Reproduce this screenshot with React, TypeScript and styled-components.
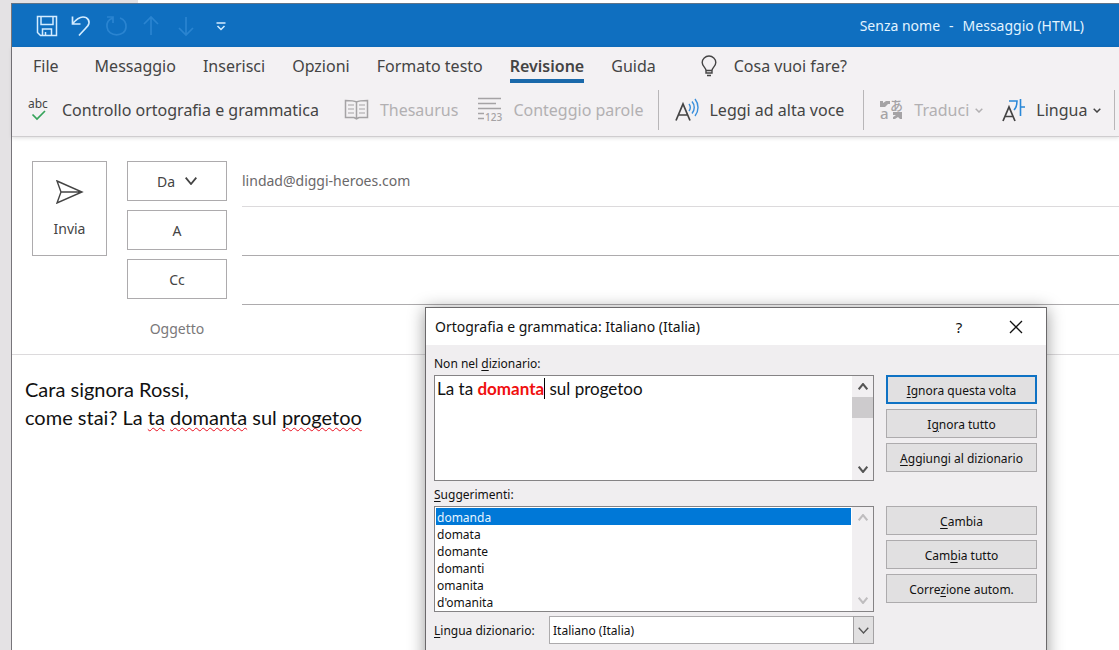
import React from "react";
import styled, { createGlobalStyle, css } from "styled-components";

const ui = `"Noto Sans", "Open Sans", sans-serif`;
const doc = `Lato, "Open Sans", sans-serif`;

const Global = createGlobalStyle`
  *, *::before, *::after { box-sizing: border-box; }
  body { margin: 0; background: #fff; font-family: ${ui}; color: #444; }
  button, input, select { font: inherit; color: inherit; border-radius: 0; margin: 0; }
`;

const Desktop = styled.div`
  position: relative;
  display: flex;
  flex-direction: column;
  min-height: 100vh;
  padding-left: 11px;
  overflow: hidden;
  background: linear-gradient(90deg, #e4e2e4 138px, #fff 138px);
`;
const TopGap = styled.div`
  height: 3px;
`;
const Window = styled.main`
  flex: 1;
  display: flex;
  flex-direction: column;
  background: #fff;
  border-left: 1px solid #77757a;
  border-top: 1px solid #5f7388;
`;

const TitleBar = styled.header`
  display: flex;
  align-items: center;
  justify-content: space-between;
  height: 43px;
  padding: 0 35px 0 24px;
  background: #0f6fc0;
  color: #e2f4ff;
`;
const QuickAccess = styled.div`
  display: flex;
  align-items: center;
  gap: 11px;
`;
const IconButton = styled.button<{ $faded?: boolean }>`
  display: flex;
  padding: 0;
  border: 0;
  background: none;
  color: ${(p) => (p.$faded ? "#2a84d0" : "#d3ecff")};
`;
const Title = styled.h1`
  display: flex;
  gap: 9px;
  margin: 0;
  font-size: 14px;
  font-weight: 400;
  line-height: 20px;
`;

const Ribbon = styled.div`
  background: #f3f1f3;
  border-bottom: 1px solid #cfcdcf;
  box-shadow: 0 1px 4px rgba(0, 0, 0, 0.14);
`;
const Tabs = styled.nav`
  display: flex;
  align-items: flex-start;
  gap: 27px;
  height: 40px;
  padding: 8px 0 0 21px;
`;
const Tab = styled.button<{ $active?: boolean; $first?: boolean }>`
  padding: 0 0 2px;
  border: 0;
  border-bottom: 4px solid ${(p) => (p.$active ? "#1a69aa" : "transparent")};
  background: none;
  font-size: 16px;
  line-height: 22px;
  font-weight: ${(p) => (p.$active ? 600 : 400)};
  white-space: nowrap;
  ${(p) => p.$first && css`margin-right: 9px;`}
`;
const TellMe = styled.button`
  display: flex;
  gap: 17px;
  margin-left: 18px;
  padding: 0;
  border: 0;
  background: none;
  font-size: 16px;
  line-height: 22px;
`;
const Commands = styled.div`
  display: flex;
  align-items: center;
  height: 49px;
  padding: 0 0 3px 16px;
`;
const Command = styled.button<{ $disabled?: boolean; $gap: number }>`
  flex: none;
  display: flex;
  align-items: center;
  gap: 10px;
  padding: 0;
  margin-right: ${(p) => p.$gap}px;
  border: 0;
  background: none;
  font-size: 16px;
  line-height: 22px;
  white-space: nowrap;
  color: ${(p) => (p.$disabled ? "#b2b0b2" : "#444")};
`;
const Caret = styled.span`
  display: flex;
  margin-left: -4px;
`;
const Separator = styled.span`
  flex: none;
  width: 1px;
  height: 40px;
  margin-right: 16px;
  background: #b8b6b8;
`;

const Envelope = styled.section`
  display: flex;
  align-items: flex-start;
  gap: 20px;
  padding: 24px 0 0 20px;
  border-bottom: 1px solid #dcdadc;
`;
const SendButton = styled.button`
  display: flex;
  flex-direction: column;
  align-items: center;
  gap: 15px;
  width: 75px;
  height: 95px;
  padding: 18px 0 0;
  border: 1px solid #adabad;
  background: #fff;
  font-size: 14px;
  line-height: 20px;
`;
const Fields = styled.div`
  flex: 1;
  display: flex;
  flex-direction: column;
  gap: 3px;
`;
const FieldRow = styled.div`
  display: flex;
  align-items: flex-start;
  gap: 15px;
  height: 46px;
`;
const fieldLabel = css`
  display: flex;
  align-items: center;
  justify-content: center;
  gap: 10px;
  width: 100px;
  height: 40px;
  font-size: 14px;
`;
const FieldButton = styled.button`
  ${fieldLabel}
  padding: 0;
  border: 1px solid #adabad;
  background: #fff;
`;
const FieldLabel = styled.label`
  ${fieldLabel}
  color: #7a787a;
`;
const FieldInput = styled.input<{ $line?: string }>`
  flex: 1;
  height: 46px;
  padding: 0 0 6px;
  border: 0;
  border-bottom: 1px solid ${(p) => p.$line ?? "transparent"};
  outline: 0;
  background: none;
  font-size: 14px;
  color: #6a686a;
`;

const MessageBody = styled.div`
  flex: 1;
  padding: 20px 13px;
  font-family: ${doc};
  font-size: 20px;
  line-height: 28px;
  color: #111;
  outline: 0;
  p { margin: 0; }
`;
const Misspelled = styled.span`
  text-decoration: underline wavy #e81020 1px;
  text-underline-offset: 2px;
  text-decoration-skip-ink: none;
`;

const Dialog = styled.section`
  position: absolute;
  left: 425px;
  top: 307px;
  width: 622px;
  background: #f0eef0;
  border: 1px solid #6b696b;
  box-shadow: 0 2px 16px rgba(0, 0, 0, 0.4);
  font-size: 12px;
  color: #111;
`;
const DialogBar = styled.header`
  display: flex;
  align-items: center;
  height: 37px;
  padding: 0 22px 0 9px;
  background: #fff;
`;
const DialogTitle = styled.h2`
  flex: 1;
  margin: 0;
  font-size: 14px;
  font-weight: 400;
`;
const BarButton = styled.button`
  display: flex;
  align-items: center;
  justify-content: center;
  width: 16px;
  height: 24px;
  margin-left: 41px;
  padding: 0;
  border: 0;
  background: none;
  font-size: 15px;
  line-height: 20px;
`;
const DialogContent = styled.div`
  display: grid;
  grid-template-columns: 440px 1fr;
  column-gap: 12px;
  padding: 9px 9px 24px 8px;
`;
const Caption = styled.div`
  grid-column: 1 / -1;
  height: 21px;
  line-height: 20px;
`;
const Panel = styled.div`
  display: flex;
  height: 106px;
  border: 1px solid #858385;
  background: #fff;
`;
const Sentence = styled.div`
  flex: 1;
  padding: 2px;
  font-family: ${doc};
  font-size: 17px;
  line-height: 22px;
  outline: 0;
  strong { color: #f01010; border-right: 1px solid #000; }
`;
const Suggestions = styled.select`
  flex: 1;
  height: 104px;
  padding: 1px;
  border: 0;
  outline: 0;
  background: #fff;
  appearance: none;
  overflow: hidden;
  scrollbar-width: none;
  option {
    height: 17px;
    min-height: 17px;
    padding: 1px 1px 0;
    line-height: 17px;
  }
  option:checked {
    background: linear-gradient(#0078d7, #0078d7);
    color: #e6f5ff;
  }
`;
const Scrollbar = styled.div<{ $off?: boolean }>`
  display: flex;
  flex-direction: column;
  width: 21px;
  background: #f1eff1;
  color: ${(p) => (p.$off ? "#bfbdbf" : "#555")};
`;
const ScrollButton = styled.button`
  display: flex;
  align-items: center;
  justify-content: center;
  height: 21px;
  padding: 0;
  border: 0;
  background: none;
`;
const Track = styled.div`
  flex: 1;
`;
const Thumb = styled.div`
  height: 21px;
  background: #cdcbcd;
`;
const Actions = styled.div`
  display: flex;
  flex-direction: column;
  gap: 5px;
`;
const Action = styled.button<{ $primary?: boolean }>`
  height: 29px;
  padding: 1px 0 0;
  border: ${(p) => (p.$primary ? "2px solid #0f72c4" : "1px solid #adabad")};
  background: #e1e0e1;
`;
const Key = styled.span`
  text-decoration: underline;
  text-underline-offset: 2px;
`;
const Gap = styled.div`
  grid-column: 1 / -1;
  height: 4px;
`;
const LanguageRow = styled.div`
  display: flex;
  align-items: center;
  justify-content: space-between;
  height: 28px;
`;
const SelectBox = styled.div`
  display: grid;
  grid-template-columns: 1fr 21px;
  width: 325px;
  height: 28px;
  select {
    grid-area: 1 / 1 / 2 / 3;
    padding: 0 3px;
    border: 1px solid #adabad;
    background: #fff;
    appearance: none;
    outline: 0;
  }
  span {
    grid-area: 1 / 2;
    z-index: 1;
    display: flex;
    align-items: center;
    justify-content: center;
    border: 1px solid #a3a1a3;
    background: #e1e0e1;
    color: #555;
    pointer-events: none;
  }
`;

const Icon = ({ w, h, sw = 1.5, children }: { w: number; h: number; sw?: number; children: React.ReactNode }) => (
  <svg width={w} height={h} viewBox={`0 0 ${w} ${h}`} fill="none" stroke="currentColor" strokeWidth={sw} aria-hidden="true">
    {children}
  </svg>
);
const Chevron = ({ w = 8, h = 5, sw = 1.5, up }: { w?: number; h?: number; sw?: number; up?: boolean }) => (
  <Icon w={w} h={h} sw={sw}>
    <path d={up ? `M.7 ${h - 0.7} ${w / 2} 1l${w / 2 - 0.7} ${h - 1.7}` : `M.7 .7 ${w / 2} ${h - 1}l${w / 2 - 0.7} ${1.7 - h}`} />
  </Icon>
);

const Scroll = ({ off }: { off?: boolean }) => (
  <Scrollbar $off={off}>
    <ScrollButton aria-label="Scorri su"><Chevron w={10} h={7} sw={2} up /></ScrollButton>
    {!off && <Thumb />}
    <Track />
    <ScrollButton aria-label="Scorri giù"><Chevron w={10} h={7} sw={2} /></ScrollButton>
  </Scrollbar>
);

const words = ["domanda", "domata", "domante", "domanti", "omanita", "d'omanita"];

export default function App() {
  return (
    <Desktop>
      <Global />
      <TopGap />
      <Window>
        <TitleBar>
          <QuickAccess>
            <IconButton aria-label="Salva">
              <Icon w={22} h={22}>
                <path d="M1.500 1.500h19v19H4.500l-3-3zM5 2v7.500h12V2M6.500 20v-6h9v6M9.500 20v-3" />
              </Icon>
            </IconButton>
            <IconButton aria-label="Annulla">
              <Icon w={24} h={22} sw={1.7}>
                <path d="M3.500 1.500v7.500h8M3.500 9c3.500-4.500 7-7 10.500-7 5 0 7.500 4.500 5 8.500-1.200 1.800-4.500 5-9 10" />
              </Icon>
            </IconButton>
            <IconButton aria-label="Ripeti" $faded>
              <Icon w={24} h={22} sw={1.7}>
                <path d="M3 2h6v6M9 3C4.500 4.500 2.500 8 3 12c1 10.500 18.500 10.500 19 0 .2-4-2-7.500-6-9" />
              </Icon>
            </IconButton>
            <IconButton aria-label="Elemento precedente" $faded>
              <Icon w={24} h={22} sw={1.7}><path d="M12 20V2M5 9l7-7 7 7" /></Icon>
            </IconButton>
            <IconButton aria-label="Elemento successivo" $faded>
              <Icon w={24} h={22} sw={1.7}><path d="M12 2v18M5 13l7 7 7-7" /></Icon>
            </IconButton>
            <IconButton aria-label="Personalizza barra di accesso rapido">
              <Icon w={24} h={10}><path d="M7.500 2h9M8.500 5l3.500 3.500L15.500 5" /></Icon>
            </IconButton>
          </QuickAccess>
          <Title>
            <span>Senza nome</span>
            <span>-</span>
            <span>Messaggio (HTML)</span>
          </Title>
        </TitleBar>

        <Ribbon>
          <Tabs>
            <Tab $first>File</Tab>
            <Tab>Messaggio</Tab>
            <Tab>Inserisci</Tab>
            <Tab>Opzioni</Tab>
            <Tab>Formato testo</Tab>
            <Tab $active>Revisione</Tab>
            <Tab>Guida</Tab>
            <TellMe>
              <Icon w={16} h={22} sw={1.4}>
                <path d="M5 15.500c0-3-3.800-4-3.800-8a6.800 6.500 0 0 1 13.600 0c0 4-3.800 5-3.800 8zM5 15.500V18h6v-2.500M6 20.500h4" />
              </Icon>
              Cosa vuoi fare?
            </TellMe>
          </Tabs>
          <Commands>
            <Command $gap={25}>
              <svg width="24" height="32" viewBox="0 0 24 32" fill="none" aria-hidden="true">
                <text x="0" y="14" fontSize="12" fill="#444" fontFamily={ui}>abc</text>
                <path d="M4.500 20.500l4.500 4.500 8-8" stroke="#35a35a" strokeWidth="1.700" />
              </svg>
              Controllo ortografia e grammatica
            </Command>
            <Command $disabled $gap={20}>
              <Icon w={26} h={22}>
                <g stroke="#a5a3a5">
                  <path d="M12.500 3C10 1.500 5 1.500 1.500 1.500v17h8.500l2.500 1.500 2.500-1.500h8.500v-17C20 1.500 15 1.500 12.500 3zM12.500 3v17" />
                  <path d="M4 6h6M4 10h6M4 14h6M15 6h6M15 10h6M15 14h6" strokeWidth="1.200" />
                </g>
              </Icon>
              Thesaurus
            </Command>
            <Command $disabled $gap={15}>
              <svg width="25" height="32" viewBox="0 0 25 32" fill="none" stroke="#a5a3a5" strokeWidth="1.700" aria-hidden="true">
                <path d="M0 4.500h23M0 9.500h18M0 14.500h23M0 19.500h6M0 24.500h6" />
                <text x="7" y="27" fontSize="10" fontWeight="500" fill="#a5a3a5" stroke="none" fontFamily={ui}>123</text>
              </svg>
              Conteggio parole
            </Command>
            <Separator />
            <Command $gap={19}>
              <svg width="24" height="24" viewBox="0 0 24 24" fill="none" stroke="#444" strokeWidth="1.700" aria-hidden="true">
                <path d="M1 22.500 8 6l7 16.500M3.500 17h9" />
                <path d="M14 6c1.500 2 1.500 5 0 7M17 3.500c3 3.500 3 8.500 0 12M20 1c4 5 4 12 0 17" stroke="#3a8fdc" strokeWidth="1.400" />
              </svg>
              Leggi ad alta voce
            </Command>
            <Separator />
            <Command $disabled $gap={19}>
              <svg width="24" height="32" viewBox="0 0 24 32" aria-hidden="true" fill="#a5a3a5" fontFamily={ui}>
                <path d="M0 7h3v2l3-2h4v3H8l-3 3H0z" />
                <text x="0" y="25" fontSize="15" fontWeight="500">a</text>
                <text x="10" y="16" fontSize="13" fontWeight="500" fontFamily="'Noto Sans CJK JP', sans-serif">あ</text>
                <path d="M13 18h9v7h-2l-2-2-3 2h-2v-2l3-2h-3z" />
              </svg>
              Traduci
              <Caret><Chevron /></Caret>
            </Command>
            <Command $gap={13}>
              <svg width="24" height="24" viewBox="0 0 24 24" fill="none" stroke="#444" strokeWidth="1.700" aria-hidden="true">
                <path d="M1 23 7 9l6 14M3 18.500h8" />
                <path d="M7 3h8c0 3-1 7-3 9M18.500 1v17M18.500 9H23" stroke="#2a88d8" strokeWidth="1.600" />
              </svg>
              Lingua
              <Caret><Chevron /></Caret>
            </Command>
            <Separator />
          </Commands>
        </Ribbon>

        <Envelope>
          <SendButton>
            <Icon w={28} h={24} sw={1.4}>
              <path d="M1 1 26 12 1 23l4-11zM5 12h21" />
            </Icon>
            Invia
          </SendButton>
          <Fields>
            <FieldRow>
              <FieldButton>Da <Chevron w={12} h={8} sw={1.800} /></FieldButton>
              <FieldInput aria-label="Da" defaultValue="lindad@diggi-heroes.com" $line="#dcdadc" />
            </FieldRow>
            <FieldRow>
              <FieldButton>A</FieldButton>
              <FieldInput aria-label="A" $line="#adabad" />
            </FieldRow>
            <FieldRow>
              <FieldButton>Cc</FieldButton>
              <FieldInput aria-label="Cc" $line="#adabad" />
            </FieldRow>
            <FieldRow>
              <FieldLabel htmlFor="subject">Oggetto</FieldLabel>
              <FieldInput id="subject" />
            </FieldRow>
          </Fields>
        </Envelope>

        <MessageBody role="textbox" aria-label="Messaggio" contentEditable suppressContentEditableWarning spellCheck={false}>
          <p>Cara signora Rossi,</p>
          <p>
            come stai? La <Misspelled>ta</Misspelled> <Misspelled>domanta</Misspelled> sul <Misspelled>progetoo</Misspelled>
          </p>
        </MessageBody>
      </Window>

      <Dialog role="dialog" aria-labelledby="dialog-title">
        <DialogBar>
          <DialogTitle id="dialog-title">Ortografia e grammatica: Italiano (Italia)</DialogTitle>
          <BarButton aria-label="Guida">?</BarButton>
          <BarButton aria-label="Chiudi">
            <Icon w={14} h={14} sw={1.300}><path d="M1 1l12 12M13 1 1 13" /></Icon>
          </BarButton>
        </DialogBar>
        <DialogContent>
          <Caption id="unknown">Non nel <Key>d</Key>izionario:</Caption>
          <Panel>
            <Sentence role="textbox" aria-labelledby="unknown" contentEditable suppressContentEditableWarning spellCheck={false}>
              La ta <strong>domanta</strong> sul progetoo
            </Sentence>
            <Scroll />
          </Panel>
          <Actions>
            <Action $primary><Key>I</Key>gnora questa volta</Action>
            <Action>I<Key>g</Key>nora tutto</Action>
            <Action><Key>A</Key>ggiungi al dizionario</Action>
          </Actions>
          <Gap />
          <Caption as="label" htmlFor="suggestions"><Key>S</Key>uggerimenti:</Caption>
          <Panel>
            <Suggestions id="suggestions" size={6} defaultValue="domanda">
              {words.map((w) => <option key={w}>{w}</option>)}
            </Suggestions>
            <Scroll off />
          </Panel>
          <Actions>
            <Action><Key>C</Key>ambia</Action>
            <Action>Cam<Key>b</Key>ia tutto</Action>
            <Action>Corre<Key>z</Key>ione autom.</Action>
          </Actions>
          <Gap />
          <LanguageRow>
            <label htmlFor="language"><Key>L</Key>ingua dizionario:</label>
            <SelectBox>
              <select id="language"><option>Italiano (Italia)</option></select>
              <span><Chevron w={11} h={7} sw={1.300} /></span>
            </SelectBox>
          </LanguageRow>
        </DialogContent>
      </Dialog>
    </Desktop>
  );
}
